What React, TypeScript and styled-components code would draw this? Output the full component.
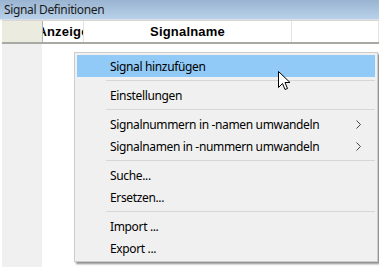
import React from "react";
import styled, { createGlobalStyle } from "styled-components";

const GlobalStyle = createGlobalStyle`
  html, body {
    margin: 0;
    padding: 0;
    background: #ffffff;
  }
  body {
    width: 379px;
    height: 267px;
    overflow: hidden;
    font-family: "Noto Sans", "Open Sans", sans-serif;
  }
`;

const Window = styled.div`
  position: relative;
  width: 379px;
  height: 267px;
  display: flex;
  flex-direction: column;
  background: #ffffff;
`;

const TitleBar = styled.div`
  height: 19px;
  padding-left: 4px;
  display: flex;
  align-items: center;
  background: linear-gradient(to bottom, #99b4d1, #b9d1ea);
  border-bottom: 1px solid #d9dee6;
  color: #1a1a1a;
  font-size: 12px;
  letter-spacing: -0.35px;
`;

const Grid = styled.div`
  flex: 1;
  display: flex;
  flex-direction: column;
  padding-left: 2px;
`;

const HeaderRow = styled.div`
  height: 21px;
  display: flex;
  border-top: 1px solid #d6d6d6;
  border-bottom: 2px solid #a9a9a3;
`;

const HeaderCell = styled.div<{ $w?: number; $corner?: boolean }>`
  ${(p) => (p.$w ? `width: ${p.$w}px; flex: none;` : "flex: 1;")}
  display: flex;
  align-items: center;
  justify-content: center;
  overflow: hidden;
  white-space: nowrap;
  background: ${(p) => (p.$corner ? "#ecebdf" : "#ffffff")};
  border-right: 1px solid ${(p) => (p.$corner ? "#b5b4a8" : "#e3e3e3")};
  font-family: "Liberation Sans", Arial, sans-serif;
  font-weight: 700;
  font-size: 13px;
  letter-spacing: 0.2px;
  color: #000;
`;

const Body = styled.div`
  flex: 1;
  display: flex;
`;

const RowHeaders = styled.div`
  width: 40px;
  background: #f0f0f0;
`;

const Menu = styled.div`
  position: absolute;
  left: 74px;
  top: 52px;
  width: 298px;
  padding: 2px;
  background: #f0f0f0;
  border: 1px solid #cccccc;
  box-shadow: 2px 2px 2px rgba(0, 0, 0, 0.45);
  display: flex;
  flex-direction: column;
`;

const Item = styled.div<{ $active?: boolean }>`
  height: 22px;
  display: flex;
  align-items: center;
  padding-left: 33px;
  padding-right: 14px;
  background: ${(p) => (p.$active ? "#91c9f7" : "transparent")};
  color: #000;
  font-size: 12px;
  letter-spacing: -0.35px;
  white-space: nowrap;
`;

const Label = styled.span`
  flex: 1;
`;

const Separator = styled.div`
  height: 7px;
  display: flex;
  align-items: center;
  padding-left: 29px;
  &::after {
    content: "";
    flex: 1;
    height: 1px;
    background: #d7d7d7;
  }
`;

const Cursor = styled.svg`
  position: absolute;
  left: 278px;
  top: 71px;
`;

const Chevron = () => (
  <svg width="5" height="9" viewBox="0 0 5 9">
    <path d="M0.5 0.5 L4.5 4.5 L0.5 8.5" fill="none" stroke="#444" strokeWidth="1" />
  </svg>
);

type Entry = { label: string; sub?: boolean; active?: boolean } | "sep";

const entries: Entry[] = [
  { label: "Signal hinzufügen", active: true },
  "sep",
  { label: "Einstellungen" },
  "sep",
  { label: "Signalnummern in -namen umwandeln", sub: true },
  { label: "Signalnamen in -nummern umwandeln", sub: true },
  "sep",
  { label: "Suche..." },
  { label: "Ersetzen..." },
  "sep",
  { label: "Import ..." },
  { label: "Export ..." },
];

export default function App() {
  return (
    <>
      <GlobalStyle />
      <Window>
        <TitleBar>Signal Definitionen</TitleBar>
        <Grid>
          <HeaderRow>
            <HeaderCell $w={40} $corner />
            <HeaderCell $w={40}>Anzeige</HeaderCell>
            <HeaderCell $w={207}>Signalname</HeaderCell>
            <HeaderCell />
          </HeaderRow>
          <Body>
            <RowHeaders />
          </Body>
        </Grid>
        <Menu>
          {entries.map((e, i) =>
            e === "sep" ? (
              <Separator key={i} />
            ) : (
              <Item key={i} $active={e.active}>
                <Label>{e.label}</Label>
                {e.sub && <Chevron />}
              </Item>
            )
          )}
        </Menu>
        <Cursor width="13" height="21" viewBox="0 0 13 21">
          <path
            d="M0.5 0.5 L0.5 16.5 L4.5 12.5 L7 18.5 L9.5 17.5 L7 11.5 L12 11.5 Z"
            fill="#fff"
            stroke="#000"
            strokeWidth="1"
            strokeLinejoin="miter"
          />
        </Cursor>
      </Window>
    </>
  );
}
